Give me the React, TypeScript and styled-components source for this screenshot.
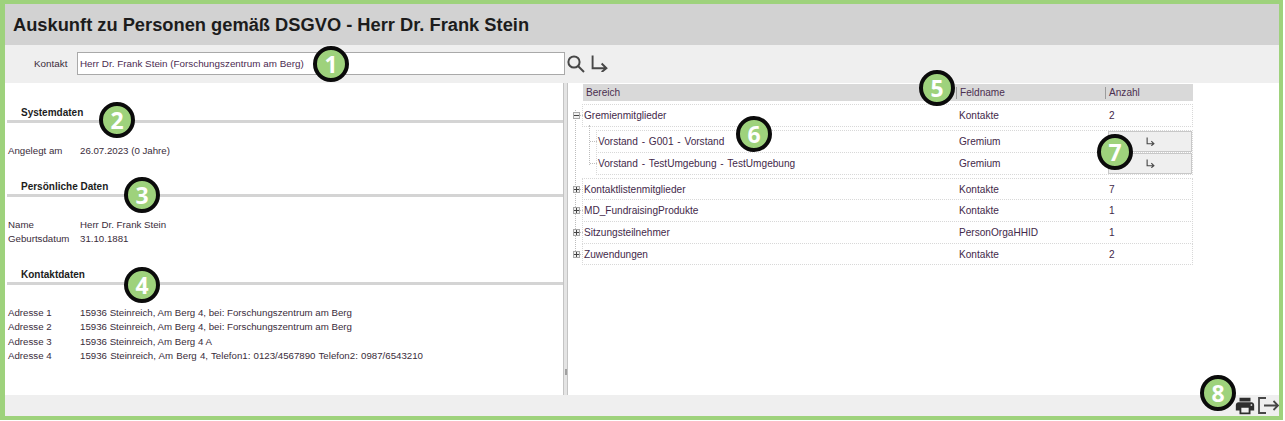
import React from "react";
import styled, { createGlobalStyle } from "styled-components";
import { MdPrint } from "react-icons/md";

const Global = createGlobalStyle`
  html, body { margin: 0; padding: 0; background: #fff; }
  * { box-sizing: border-box; }
  body { font-family: "Liberation Sans", Arial, sans-serif; }
`;

const Frame = styled.div`
  position: relative;
  width: 1283px;
  height: 420px;
  border: solid #9ed27c;
  border-width: 4px 4px 4px 5px;
  display: flex;
  flex-direction: column;
  background: #fff;
  color: #3a2c3a;
  font-size: 9.85px;
  overflow: hidden;
`;
const TitleBar = styled.header`
  height: 41px;
  flex: none;
  background: #d2d2d2;
  display: flex;
  align-items: center;
  padding-left: 8px;
`;
const Title = styled.h1`
  margin: 0;
  font-size: 18.3px;
  font-weight: 700;
  color: #1c1c1c;
`;
const Toolbar = styled.div`
  height: 38px;
  flex: none;
  background: #efefef;
  display: flex;
  align-items: center;
  padding: 0 0 1px 29px;
`;
const ToolLabel = styled.span`
  width: 43px;
  flex: none;
`;
const TextBox = styled.div`
  width: 488px;
  height: 23px;
  border: 1px solid #a9a9a9;
  background: #fff;
  display: flex;
  align-items: center;
  padding-left: 2px;
  color: #4b2a50;
`;
const ToolIcon = styled.svg`
  display: block;
  flex: none;
  fill: none;
  stroke: #474747;
`;
const SearchIcon = styled(ToolIcon)`
  margin-left: 2px;
`;
const JumpIcon = styled(ToolIcon)`
  margin-left: 6px;
`;
const Main = styled.main`
  flex: 1;
  min-height: 0;
  display: flex;
`;
const LeftPane = styled.section`
  width: 558px;
  flex: none;
  padding-top: 24px;
`;
const SectionHead = styled.h2`
  margin: 0;
  height: 16px;
  border-bottom: 3px solid #d4d4d4;
  margin-left: 2px;
  padding-left: 14px;
  font-size: 10px;
  line-height: 11px;
  font-weight: 700;
  color: #1c1c1c;
`;
const Facts = styled.dl`
  margin: 0;
  padding: 20px 0 23.6px 3px;
  display: grid;
  grid-template-columns: 72px 1fr;
  grid-auto-rows: 14.4px;
  align-items: center;
  font-size: 9.7px;
`;
const FactName = styled.dt`
  margin: 0;
`;
const FactValue = styled.dd<{ $spread?: boolean }>`
  margin: 0;
  white-space: nowrap;
  word-spacing: ${(p) => (p.$spread ? "0.5px" : "0")};
`;
const Splitter = styled.div`
  width: 5px;
  flex: none;
  background: #e4e4e4;
  border-left: 1px solid #c4c4c4;
  border-right: 1px solid #c4c4c4;
  display: flex;
  align-items: flex-end;
  justify-content: center;
  padding-bottom: 20px;
`;
const Grip = styled.span`
  width: 2px;
  height: 6px;
  background: #a0a0a0;
`;
const RightPane = styled.section`
  flex: 1;
  padding: 1px 0 0 15px;
  font-size: 10.1px;
`;
const HeaderRow = styled.div`
  width: 610px;
  height: 17px;
  background: #d9d9d9;
  display: grid;
  grid-template-columns: 373px 149px 1fr;
  align-items: center;
  color: #4b2f50;
`;
const HeaderCell = styled.div<{ $divided?: boolean }>`
  padding-left: 3px;
  height: 12px;
  line-height: 12px;
  border-left: ${(p) => (p.$divided ? "1px solid #9c9c9c" : "none")};
`;
const Tree = styled.div`
  position: relative;
  margin: 4px 0 0 -1px;
  width: 611px;
  &::before {
    content: "";
    position: absolute;
    left: -7px;
    top: 6px;
    bottom: 10px;
    border-left: 1px dotted #bdbdbd;
  }
`;
const Row = styled.div`
  position: relative;
  height: 22.7px;
  border: 1px dotted #d8d8d8;
  margin-top: -1px;
  display: grid;
  grid-template-columns: 375px 150px 1fr;
  align-items: center;
  padding-left: 1px;
  background: #fff;
  color: #43294a;
  &::before {
    content: "";
    position: absolute;
    left: -7px;
    width: 7px;
    top: 10px;
    border-top: 1px dotted #bdbdbd;
  }
`;
const Expander = styled.span<{ $open?: boolean }>`
  position: absolute;
  z-index: 1;
  left: -10px;
  top: 7px;
  width: 7px;
  height: 7px;
  border: 1px solid #a8a8a8;
  background: ${(p) =>
    p.$open
      ? "linear-gradient(#444, #444) center / 5px 1px no-repeat, #f0f0f0"
      : "linear-gradient(#444, #444) center / 5px 1px no-repeat, linear-gradient(#444, #444) center / 1px 5px no-repeat, #f0f0f0"};
`;
const ChildGroup = styled.div`
  position: relative;
  margin: 4px 0 4px 14px;
  &::before {
    content: "";
    position: absolute;
    left: -7px;
    top: -5px;
    bottom: 10px;
    border-left: 1px dotted #bdbdbd;
  }
`;
const Cell = styled.span`
  white-space: nowrap;
`;
const ChildText = styled(Cell)`
  word-spacing: 1px;
`;
const ChildRow = styled(Row)`
  height: 23px;
  grid-template-columns: 361px 149px 1fr;
`;
const JumpButton = styled.button`
  height: 21px;
  margin: 0;
  padding: 0;
  background: #efefef;
  border: 1px solid #c8c8c8;
  display: flex;
  align-items: center;
  justify-content: center;
`;
const Footer = styled.footer`
  height: 21px;
  flex: none;
  background: #efefef;
  display: flex;
  justify-content: flex-end;
  align-items: flex-start;
  padding: 2px 0 0 0;
  gap: 2px;
`;
const PrintIcon = styled(MdPrint)`
  display: block;
  color: #2e2e2e;
  margin-top: -2px;
`;
const Badge = styled.span<{ $x: number; $y: number }>`
  position: absolute;
  left: ${(p) => p.$x - 5 - 18}px;
  top: ${(p) => p.$y - 4 - 18}px;
  width: 36px;
  height: 36px;
  border-radius: 50%;
  border: 4px solid #0b0b0b;
  background: #9ed27c;
  color: #fff;
  font-family: "Open Sans", "Liberation Sans", sans-serif;
  font-size: 23px;
  font-weight: 700;
  display: flex;
  align-items: center;
  justify-content: center;
  z-index: 5;
`;

const sections = [
  { title: "Systemdaten", rows: [["Angelegt am", "26.07.2023 (0 Jahre)"]] },
  {
    title: "Persönliche Daten",
    rows: [
      ["Name", "Herr Dr. Frank Stein"],
      ["Geburtsdatum", "31.10.1881"],
    ],
  },
  {
    title: "Kontaktdaten",
    rows: [
      ["Adresse 1", "15936 Steinreich, Am Berg 4, bei: Forschungszentrum am Berg"],
      ["Adresse 2", "15936 Steinreich, Am Berg 4, bei: Forschungszentrum am Berg"],
      ["Adresse 3", "15936 Steinreich, Am Berg 4 A"],
      ["Adresse 4", "15936 Steinreich, Am Berg 4, Telefon1: 0123/4567890 Telefon2: 0987/6543210"],
    ],
  },
];

const collapsed = [
  ["Kontaktlistenmitglieder", "Kontakte", "7"],
  ["MD_FundraisingProdukte", "Kontakte", "1"],
  ["Sitzungsteilnehmer", "PersonOrgaHHID", "1"],
  ["Zuwendungen", "Kontakte", "2"],
];

const children = ["Vorstand - G001 - Vorstand", "Vorstand - TestUmgebung - TestUmgebung"];

const badges: [string, number, number][] = [
  ["1", 331, 64],
  ["2", 117, 120],
  ["3", 142, 195],
  ["4", 142, 285],
  ["5", 937, 88],
  ["6", 754, 134],
  ["7", 1115, 152],
  ["8", 1218, 393],
];

export default function App() {
  return (
    <Frame>
      <Global />
      <TitleBar>
        <Title>Auskunft zu Personen gemäß DSGVO - Herr Dr. Frank Stein</Title>
      </TitleBar>
      <Toolbar>
        <ToolLabel>Kontakt</ToolLabel>
        <TextBox>Herr Dr. Frank Stein (Forschungszentrum am Berg)</TextBox>
        <SearchIcon width={18} height={18} viewBox="0 0 18 18" strokeWidth={2}>
          <circle cx="7" cy="7" r="5.6" />
          <path d="M11 11l6 6" />
        </SearchIcon>
        <JumpIcon width={17} height={17} viewBox="0 0 16 16" strokeWidth={1.8}>
          <path d="M1.5 0.5v12h13M10 8l4.5 4.5L10 16" />
        </JumpIcon>
      </Toolbar>
      <Main>
        <LeftPane>
          {sections.map((s) => (
            <React.Fragment key={s.title}>
              <SectionHead>{s.title}</SectionHead>
              <Facts>
                {s.rows.map(([k, v]) => (
                  <React.Fragment key={k}>
                    <FactName>{k}</FactName>
                    <FactValue $spread={v.includes("Telefon")}>{v}</FactValue>
                  </React.Fragment>
                ))}
              </Facts>
            </React.Fragment>
          ))}
        </LeftPane>
        <Splitter>
          <Grip />
        </Splitter>
        <RightPane>
          <HeaderRow>
            <HeaderCell>Bereich</HeaderCell>
            <HeaderCell $divided>Feldname</HeaderCell>
            <HeaderCell $divided>Anzahl</HeaderCell>
          </HeaderRow>
          <Tree>
            <Row>
              <Expander $open />
              <Cell>Gremienmitglieder</Cell>
              <Cell>Kontakte</Cell>
              <Cell>2</Cell>
            </Row>
            <ChildGroup>
              {children.map((c) => (
                <ChildRow key={c}>
                  <ChildText>{c}</ChildText>
                  <Cell>Gremium</Cell>
                  <JumpButton aria-label="Öffnen">
                    <ToolIcon width={9} height={9} viewBox="0 0 16 16" strokeWidth={2}>
                      <path d="M2 1v11h12M9.5 7.5l4.5 4.5-4.5 3.5" />
                    </ToolIcon>
                  </JumpButton>
                </ChildRow>
              ))}
            </ChildGroup>
            {collapsed.map(([a, b, c]) => (
              <Row key={a}>
                <Expander />
                <Cell>{a}</Cell>
                <Cell>{b}</Cell>
                <Cell>{c}</Cell>
              </Row>
            ))}
          </Tree>
        </RightPane>
      </Main>
      <Footer>
        <PrintIcon size={22} />
        <ToolIcon width={21} height={17} viewBox="0 0 21 17" strokeWidth={1.8}>
          <path d="M8 1H1v15h7M6 8.5h14M15.5 4l4.5 4.5-4.5 4.5" />
        </ToolIcon>
      </Footer>
      {badges.map(([n, x, y]) => (
        <Badge key={n} $x={x} $y={y}>
          {n}
        </Badge>
      ))}
    </Frame>
  );
}
